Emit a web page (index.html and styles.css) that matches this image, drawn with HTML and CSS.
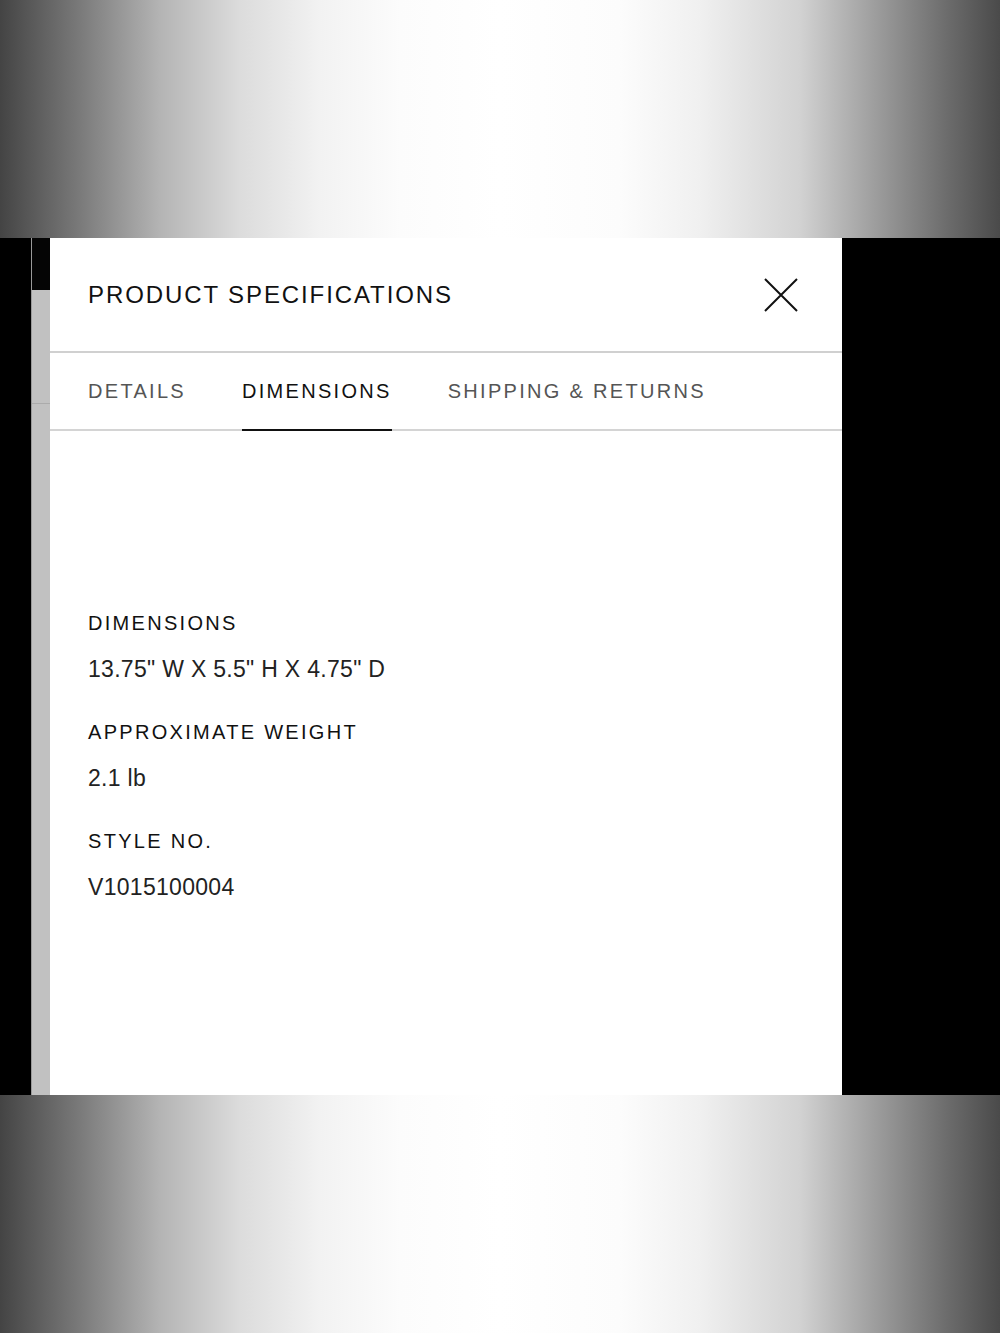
FILE: index.html
```html
<!DOCTYPE html>
<html lang="en">
<head>
    <meta charset="UTF-8">
    <meta name="viewport" content="width=device-width, initial-scale=1.0">
    <title>Product Specifications</title>
    <link rel="stylesheet" href="styles.css">
</head>
<body>
    <div class="band"></div>

    <div class="stage">
        <div class="edge"></div>
        <div class="page-strip">
            <div class="strip-top"></div>
            <div class="strip-row"></div>
        </div>

        <div class="panel">
            <div class="panel-header">
                <h1>PRODUCT SPECIFICATIONS</h1>
                <button class="close-btn" aria-label="Close">
                    <svg width="34" height="34" viewBox="0 0 34 34">
                        <path d="M1 1 L33 33 M33 1 L1 33" stroke="#111" stroke-width="2" fill="none"/>
                    </svg>
                </button>
            </div>

            <div class="tabs">
                <div class="tab">DETAILS</div>
                <div class="tab active">DIMENSIONS</div>
                <div class="tab">SHIPPING &amp; RETURNS</div>
            </div>

            <div class="spec-list">
                <div class="spec">
                    <div class="spec-label">DIMENSIONS</div>
                    <div class="spec-value">13.75" W X 5.5" H X 4.75" D</div>
                </div>
                <div class="spec">
                    <div class="spec-label">APPROXIMATE WEIGHT</div>
                    <div class="spec-value">2.1 lb</div>
                </div>
                <div class="spec">
                    <div class="spec-label">STYLE NO.</div>
                    <div class="spec-value">V1015100004</div>
                </div>
            </div>
        </div>
    </div>

    <div class="band"></div>
</body>
</html>
```

FILE: styles.css
```css
body {
    font-family: 'Liberation Sans', Arial, sans-serif;
    margin: 0;
    background-color: #000;
    color: #111;
}
.band {
    height: 238px;
    background: linear-gradient(to right, #444 0%, #7a7a7a 8%, #b4b4b4 16%, #dcdcdc 24%, #f2f2f2 32%, #fcfcfc 40%, #fff 50%, #fcfcfc 62%, #f0f0f0 70%, #d2d2d2 80%, #9a9a9a 88%, #6a6a6a 95%, #4a4a4a 100%);
}
.stage {
    display: flex;
    height: 857px;
    background-color: #000;
}
.edge {
    width: 31px;
    background-color: #000;
}
.page-strip {
    width: 19px;
    display: flex;
    flex-direction: column;
    background-color: #c1c1c1;
    border-left: 1px solid #9a9a9a;
    box-sizing: border-box;
}
.strip-top {
    height: 52px;
    background-color: #050505;
}
.strip-row {
    height: 113px;
    border-bottom: 1px solid #ababab;
}
.panel {
    width: 792px;
    background-color: #fff;
    display: flex;
    flex-direction: column;
}
.panel-header {
    height: 113px;
    display: flex;
    align-items: center;
    justify-content: space-between;
    padding: 0 44px 0 38px;
    border-bottom: 2px solid #d0d0d0;
}
.panel-header h1 {
    margin: 0;
    font-size: 24px;
    font-weight: normal;
    letter-spacing: 1.9px;
    color: #111;
}
.close-btn {
    background: none;
    border: none;
    padding: 0;
    cursor: pointer;
    display: flex;
}
.tabs {
    display: flex;
    gap: 56px;
    padding: 0 38px;
    height: 76px;
    border-bottom: 2px solid #d4d4d4;
}
.tab {
    display: flex;
    align-items: center;
    font-size: 20px;
    letter-spacing: 2.3px;
    color: #555;
    margin-bottom: -2px;
    border-bottom: 2px solid transparent;
    cursor: pointer;
}
.tab.active {
    color: #111;
    border-bottom: 2px solid #111;
}
.spec-list {
    padding: 180px 38px 0;
    display: flex;
    flex-direction: column;
    gap: 37px;
}
.spec {
    display: flex;
    flex-direction: column;
    gap: 20px;
}
.spec-label {
    font-size: 20px;
    line-height: 24px;
    letter-spacing: 2.3px;
    color: #111;
}
.spec-value {
    font-size: 23px;
    line-height: 28px;
    letter-spacing: 0.3px;
    color: #222;
}
```
